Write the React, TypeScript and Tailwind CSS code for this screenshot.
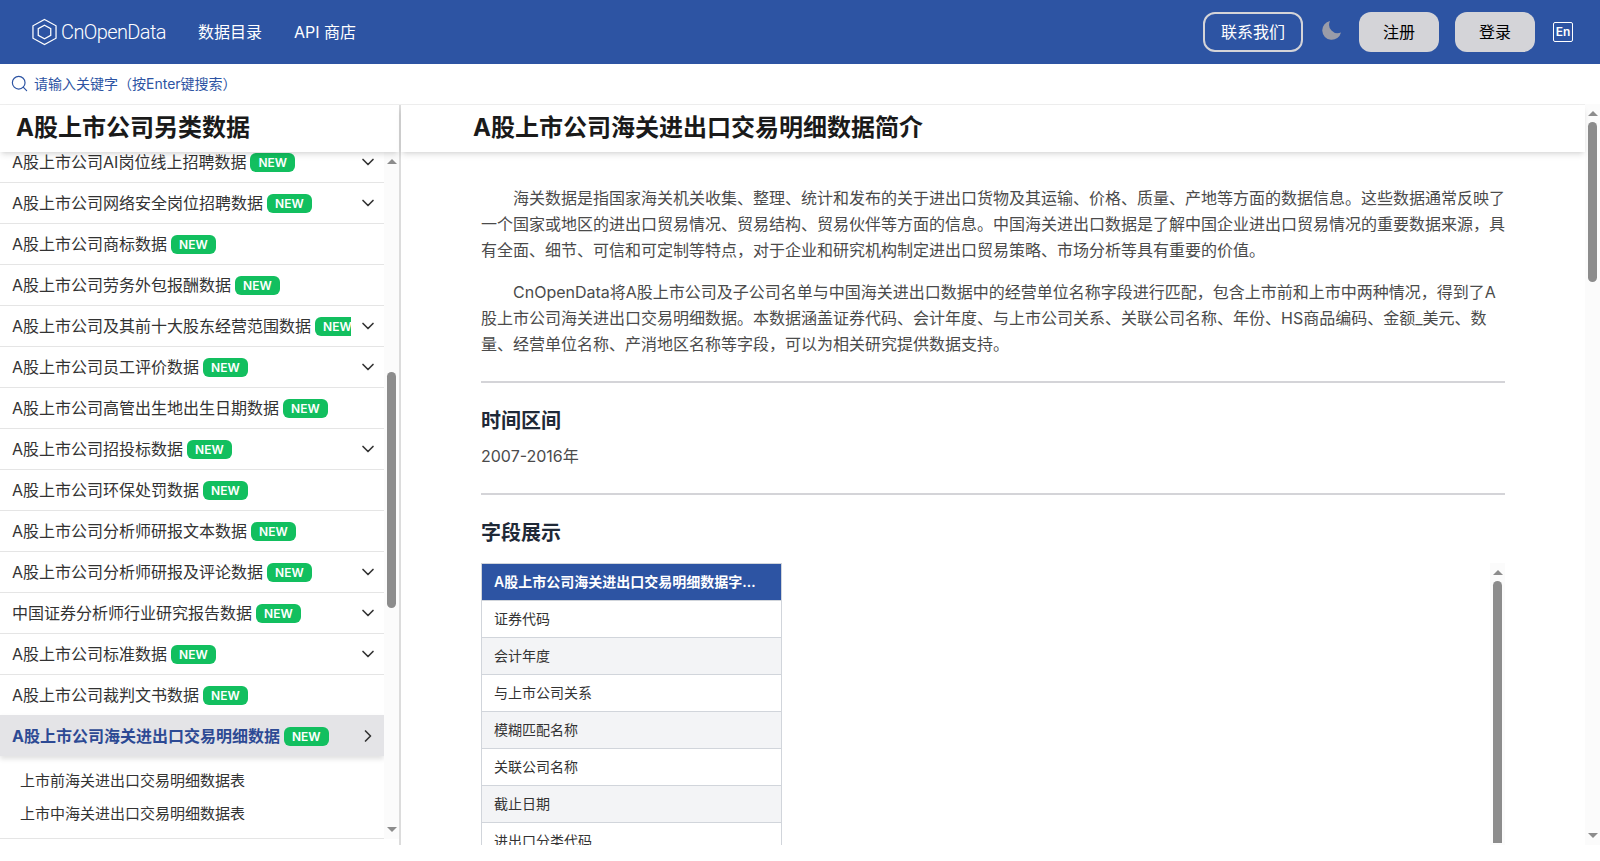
import { ChevronDown, ChevronRight, Search } from 'lucide-react';

const font = 'font-["Inter","Noto_Sans_CJK_SC",sans-serif]';

const rows = [
  { name: 'A股上市公司AI岗位线上招聘数据', arrow: true },
  { name: 'A股上市公司网络安全岗位招聘数据', arrow: true },
  { name: 'A股上市公司商标数据', arrow: false },
  { name: 'A股上市公司劳务外包报酬数据', arrow: false },
  { name: 'A股上市公司及其前十大股东经营范围数据', arrow: true },
  { name: 'A股上市公司员工评价数据', arrow: true },
  { name: 'A股上市公司高管出生地出生日期数据', arrow: false },
  { name: 'A股上市公司招投标数据', arrow: true },
  { name: 'A股上市公司环保处罚数据', arrow: false },
  { name: 'A股上市公司分析师研报文本数据', arrow: false },
  { name: 'A股上市公司分析师研报及评论数据', arrow: true },
  { name: '中国证券分析师行业研究报告数据', arrow: true },
  { name: 'A股上市公司标准数据', arrow: true },
  { name: 'A股上市公司裁判文书数据', arrow: false },
];

const fields = ['证券代码', '会计年度', '与上市公司关系', '模糊匹配名称', '关联公司名称', '截止日期', '进出口分类代码'];

function NewBadge() {
  return (
    <span className="ml-1 shrink-0 rounded-md bg-[#12bf5f] px-2 text-[12px] leading-[19px] font-semibold text-white">NEW</span>
  );
}

function Row({ name, arrow }: { name: string; arrow: boolean }) {
  return (
    <div className="flex h-[41px] shrink-0 items-center justify-between border-b border-[#e5e5e5] pl-3 pr-[6px] first:-mt-[10px]">
      <div className="flex min-w-0 flex-1 items-center overflow-hidden">
        <span className="shrink-0 text-[16px] text-[#333]">{name}</span>
        <NewBadge />
      </div>
      {arrow && <ChevronDown className="ml-[7px] shrink-0 text-[#333]" size={20} strokeWidth={2} />}
    </div>
  );
}

function Scrollbar({ className, thumb }: { className?: string; thumb: string }) {
  return (
    <div className={`flex w-[15px] shrink-0 flex-col items-center bg-[#fbfbfb] ${className ?? ''}`}>
      <div className="flex h-[18px] shrink-0 items-center justify-center">
        <div className="h-0 w-0 border-x-[5px] border-b-[5px] border-x-transparent border-b-[#8c8c8c]" />
      </div>
      <div className="min-h-0 w-full flex-1 overflow-hidden px-[3px]">
        <div className={`rounded-full bg-[#8c8c8c] ${thumb}`} />
      </div>
      <div className="flex h-5 shrink-0 items-center justify-center">
        <div className="h-0 w-0 border-x-[5px] border-t-[5px] border-x-transparent border-t-[#8c8c8c]" />
      </div>
    </div>
  );
}

export default function App() {
  return (
    <div className={`h-[861px] w-[1600px] overflow-hidden bg-white ${font}`}>
      {/* top nav */}
      <header className="flex h-16 items-center bg-[#2d54a3] pl-8 pr-[27px] text-white">
        <svg width="25" height="28" viewBox="0 0 26 28" fill="none" stroke="#fff" strokeWidth="1.3" className="mr-1">
          <path d="M13 1 L25 7.5 V20.5 L13 27 L1 20.5 V7.5 Z" />
          <path d="M13 7 L19.5 10.5 V17.5 L13 21 L6.5 17.5 V10.5 Z" />
        </svg>
        <span className="text-[20px] font-light tracking-[-0.6px] font-['Roboto',sans-serif]">CnOpenData</span>
        <nav className="ml-8 flex gap-8 text-[16px]">
          <span>数据目录</span>
          <span>API 商店</span>
        </nav>
        <div className="ml-auto flex items-center">
          <button className="h-10 w-[100px] rounded-xl border-2 border-[#d4d4d8] text-[16px]">联系我们</button>
          <svg width="20" height="20" viewBox="0 0 20 20" className="ml-[19px] mr-[17px] mb-1" fill="#9a9ca8">
            <path d="M8 1 A9.5 9.5 0 1 0 19 12.5 A8.5 8.5 0 0 1 8 1 Z" />
          </svg>
          <button className="h-10 w-20 rounded-xl bg-[#d4d4d8] text-[16px] text-black">注册</button>
          <button className="ml-4 h-10 w-20 rounded-xl bg-[#d4d4d8] text-[16px] text-black">登录</button>
          <span className="ml-[18px] flex h-5 w-5 items-center justify-center rounded-[2px] border border-white text-[12px] font-semibold">En</span>
        </div>
      </header>

      {/* search */}
      <div className="flex h-[41px] items-center gap-[5px] border-b border-[#eee] pb-px pl-[10px] text-[14px] text-[#2d54a3]">
        <Search size={19} strokeWidth={1.5} />
        <span>请输入关键字（按Enter键搜索）</span>
      </div>

      <div className="flex h-[740px]">
        {/* left panel */}
        <aside className="flex w-[401px] shrink-0 flex-col border-r-2 border-[#dcdcdc]">
          <div className="z-10 flex h-[47px] shrink-0 items-center bg-white pb-px pl-4 text-[24px] font-bold text-[#1a1a1a] shadow-md">
            A股上市公司另类数据
          </div>
          <div className="flex min-h-0 flex-1">
            <div className="flex w-[384px] shrink-0 flex-col overflow-hidden">
              {rows.map((r) => (
                <Row key={r.name} name={r.name} arrow={r.arrow} />
              ))}
              <div className="-mt-px flex h-[41px] shrink-0 items-center justify-between bg-[#e4e4e7] pl-3 pr-[6px] pt-px shadow-[0_3px_5px_rgba(0,0,0,0.12)]">
                <div className="flex items-center">
                  <span className="text-[16px] font-bold text-[#2d4a94]">A股上市公司海关进出口交易明细数据</span>
                  <NewBadge />
                </div>
                <ChevronRight className="text-[#333]" size={20} strokeWidth={2} />
              </div>
              <div className="border-b border-[#e5e5e5] pb-2 pl-5 pt-2 text-[15px] text-[#333]">
                <div className="leading-[33px]">上市前海关进出口交易明细数据表</div>
                <div className="leading-[33px]">上市中海关进出口交易明细数据表</div>
              </div>
            </div>
            <Scrollbar className="mb-[6px]" thumb="mt-[202px] h-[236px]" />
          </div>
        </aside>

        {/* main */}
        <main className="flex min-w-0 flex-1">
          <div className="flex min-w-0 flex-1 flex-col">
            <div className="z-10 flex h-[47px] shrink-0 items-center bg-white pb-px pl-[72px] text-[24px] font-bold text-[#1a1a1a] shadow-md">
              A股上市公司海关进出口交易明细数据简介
            </div>
            <div className="min-h-0 flex-1 overflow-hidden pl-[80px] pr-[80px] pt-[33px] text-[16px] leading-[26px] text-[#4b4b4b]">
              <p className="indent-8">海关数据是指国家海关机关收集、整理、统计和发布的关于进出口货物及其运输、价格、质量、产地等方面的数据信息。这些数据通常反映了一个国家或地区的进出口贸易情况、贸易结构、贸易伙伴等方面的信息。中国海关进出口数据是了解中国企业进出口贸易情况的重要数据来源，具有全面、细节、可信和可定制等特点，对于企业和研究机构制定进出口贸易策略、市场分析等具有重要的价值。</p>
              <p className="mt-4 indent-8">CnOpenData将A股上市公司及子公司名单与中国海关进出口数据中的经营单位名称字段进行匹配，包含上市前和上市中两种情况，得到了A股上市公司海关进出口交易明细数据。本数据涵盖证券代码、会计年度、与上市公司关系、关联公司名称、年份、HS商品编码、金额_美元、数量、经营单位名称、产消地区名称等字段，可以为相关研究提供数据支持。</p>
              <hr className="mt-6 border-t-2 border-[#d4d4d8]" />
              <h2 className="mt-6 text-[20px] leading-[28px] font-semibold text-[#1f2937]">时间区间</h2>
              <p className="mt-2">2007-2016年</p>
              <hr className="mt-6 border-t-2 border-[#d4d4d8]" />
              <h2 className="mt-6 text-[20px] leading-[28px] font-semibold text-[#1f2937]">字段展示</h2>
              <div className="mt-4 flex h-[300px] justify-between">
                <table className="h-fit w-[301px] table-fixed border-collapse border border-[#d1d5db] text-[14px] text-[#333]">
                  <thead>
                    <tr>
                      <th className="h-[37px] truncate border border-[#d1d5db] bg-[#2d54a3] px-3 text-left font-semibold text-white">A股上市公司海关进出口交易明细数据字段说明</th>
                    </tr>
                  </thead>
                  <tbody>
                    {fields.map((f, i) => (
                      <tr key={f} className={i % 2 === 1 ? 'bg-[#f3f4f6]' : 'bg-white'}>
                        <td className="h-[37px] border border-[#d1d5db] px-3">{f}</td>
                      </tr>
                    ))}
                  </tbody>
                </table>
                <Scrollbar thumb="h-[400px]" />
              </div>
            </div>
          </div>
          <Scrollbar className="-mt-px" thumb="h-[160px]" />
        </main>
      </div>
    </div>
  );
}
